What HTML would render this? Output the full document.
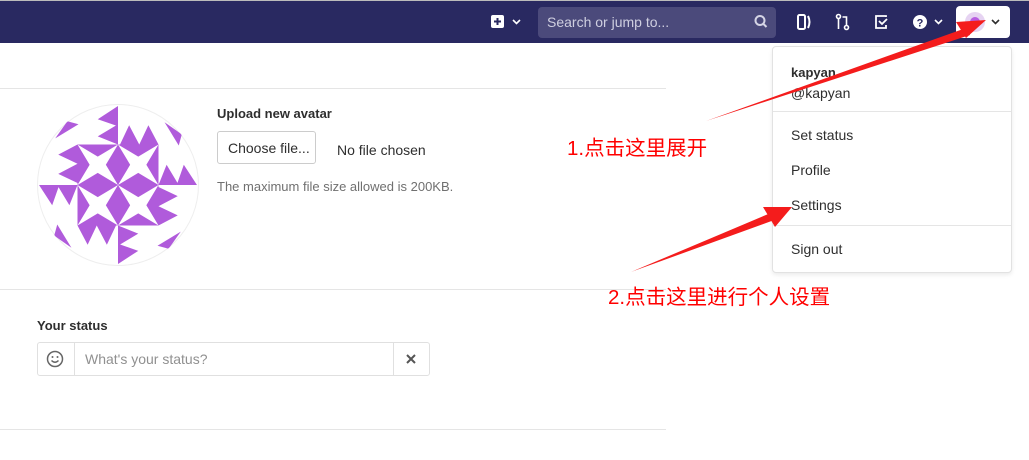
<!DOCTYPE html>
<html><head><meta charset="utf-8"><style>
*{margin:0;padding:0;box-sizing:border-box}
body{width:1029px;height:460px;background:#fff;position:relative;overflow:hidden;font-family:"Liberation Sans","Noto Sans CJK SC",sans-serif;color:#2e2e2e;font-size:14px}
.abs{position:absolute}
.hdr{left:0;top:0;width:1029px;height:43px;background:#292961;border-top:1px solid #bbb}
.line{height:1px;background:#e5e5e5;left:0;width:666px}
.dd{left:772px;top:46px;width:240px;height:227px;border:1px solid #e2e2e2;border-radius:4px;background:#fff;box-shadow:0 2px 4px rgba(0,0,0,.08)}
.dd div{position:absolute;left:18px;font-size:14px;color:#2e2e2e}
.sep{left:0!important;width:238px;height:1px;background:#e5e5e5}
.red{color:#f00;font-size:20.5px;font-family:"Liberation Sans","Noto Sans CJK SC",sans-serif}
</style></head><body>
<div class="abs hdr"></div>
<svg class="abs" style="left:0;top:0" width="1029" height="44">
 <rect x="491" y="15" width="13" height="13" rx="2" fill="#fff"/>
 <path d="M497.5 18v7M494 21.5h7" stroke="#292961" stroke-width="2"/>
 <path d="M513 20l3.5 3.5 3.5-3.5" stroke="#fff" stroke-width="1.6" fill="none"/>
 <rect x="538" y="7" width="238" height="31" rx="4" fill="#4b4a7b"/>
 <circle cx="760" cy="20.5" r="4.5" stroke="#d5d5e5" stroke-width="2" fill="none"/>
 <path d="M763.5 24l3 3" stroke="#d5d5e5" stroke-width="2"/>
 <rect x="798" y="15" width="7" height="14" rx="1.5" stroke="#fff" stroke-width="2" fill="none"/>
 <path d="M808 16q3 6 0 12" stroke="#fff" stroke-width="2" fill="none"/>
 <circle cx="838.5" cy="16.5" r="2" stroke="#fff" stroke-width="1.6" fill="none"/>
 <circle cx="846.5" cy="27.5" r="2" stroke="#fff" stroke-width="1.6" fill="none"/>
 <path d="M838.5 19v10M846.5 25v-8h-4" stroke="#fff" stroke-width="1.6" fill="none"/>
 <path d="M886 17v-1h-10v12h10v-3" stroke="#fff" stroke-width="1.8" fill="none"/>
 <path d="M879 21l3 3 5-5" stroke="#fff" stroke-width="1.8" fill="none"/>
 <circle cx="920" cy="22" r="7" fill="#fff"/>
 <text x="920" y="26.5" font-size="11" font-weight="bold" fill="#292961" text-anchor="middle" font-family="Liberation Sans">?</text>
 <path d="M935 20l3.5 3.5 3.5-3.5" stroke="#fff" stroke-width="1.6" fill="none"/>
 <rect x="956" y="6" width="54" height="32" rx="4" fill="#fff"/>
 <circle cx="975" cy="22" r="10" fill="#e6d3f2"/>
 <circle cx="975" cy="22" r="5" fill="#b85ee0"/>
 <path d="M992 20l3.5 3.5 3.5-3.5" stroke="#2e2e2e" stroke-width="1.6" fill="none"/>
</svg>
<div class="abs" style="left:547px;top:14px;color:#cfcfe0;font-size:14px">Search or jump to...</div>

<div class="abs line" style="top:88px"></div>
<div class="abs line" style="top:289px"></div>
<div class="abs line" style="top:429px"></div>

<svg class="abs" style="left:37px;top:104px" width="162" height="162" viewBox="0 0 160 160">
 <defs><clipPath id="c"><circle cx="80" cy="80" r="80"/></clipPath>
 <g id="q">
  <path d="M82 40L91 21L101 40ZM101 40L110 21L120 40Z" fill="#b05bdb"/>
  <path d="M120 80L128 60L140 80ZM138 80L145 60L158 80Z" fill="#b05bdb"/>
  <path d="M126 18L143 30L140 41Z" fill="#b05bdb"/>
  <rect x="80" y="40" width="40" height="40" fill="#b05bdb"/>
  <path d="M80 40L100 52L120 40L108 60L120 80L100 68L80 80L92 60Z" fill="#fff"/>
 </g></defs>
 <circle cx="80" cy="80" r="79.5" fill="#fff" stroke="#eee"/>
 <g clip-path="url(#c)">
  <use href="#q"/>
  <use href="#q" transform="rotate(90 80 80)"/>
  <use href="#q" transform="rotate(180 80 80)"/>
  <use href="#q" transform="rotate(270 80 80)"/>
 </g>
</svg>

<div class="abs" style="left:217px;top:106px;font-weight:bold;font-size:13px">Upload new avatar</div>
<div class="abs" style="left:217px;top:131px;width:99px;height:33px;border:1px solid #ccc;border-radius:3px;font-size:14px;padding:8px 0 0 10px;background:#fff">Choose file...</div>
<div class="abs" style="left:337px;top:142px;font-size:14px">No file chosen</div>
<div class="abs" style="left:217px;top:179px;font-size:13px;color:#707070">The maximum file size allowed is 200KB.</div>

<div class="abs" style="left:37px;top:318px;font-weight:bold;font-size:13px">Your status</div>
<div class="abs" style="left:37px;top:342px;width:393px;height:34px;border:1px solid #e0e0e0;border-radius:3px"></div>
<div class="abs" style="left:74px;top:342px;width:1px;height:34px;background:#e0e0e0"></div>
<div class="abs" style="left:393px;top:342px;width:1px;height:34px;background:#e0e0e0"></div>
<svg class="abs" style="left:46px;top:350px" width="18" height="18"><circle cx="9" cy="9" r="7.5" stroke="#666" stroke-width="1.5" fill="none"/><circle cx="6.5" cy="7" r="1" fill="#666"/><circle cx="11.5" cy="7" r="1" fill="#666"/><path d="M5.5 10.5q3.5 3.5 7 0" stroke="#666" stroke-width="1.4" fill="none"/></svg>
<div class="abs" style="left:85px;top:351px;color:#909090;font-size:14px">What's your status?</div>
<svg class="abs" style="left:405px;top:353px" width="12" height="12"><path d="M2 2l8 8M10 2l-8 8" stroke="#555" stroke-width="2"/></svg>

<div class="abs dd">
 <div style="top:18px;font-weight:bold;font-size:13px">kapyan</div>
 <div style="top:38px">@kapyan</div>
 <div class="sep" style="top:64px"></div>
 <div style="top:80px">Set status</div>
 <div style="top:115px">Profile</div>
 <div style="top:150px">Settings</div>
 <div class="sep" style="top:178px"></div>
 <div style="top:194px">Sign out</div>
</div>

<div class="abs red" style="left:567px;top:131px">1.点击这里展开</div>
<div class="abs red" style="left:608px;top:280px">2.点击这里进行个人设置</div>
<svg class="abs" style="left:0;top:0" width="1029" height="460">
 <path d="M706 121L966 28L970 35Z" fill="#f41c1c"/>
 <path d="M986 20L956 22L966 38Z" fill="#f41c1c"/>
 <path d="M631 272L773 212L777 219Z" fill="#f41c1c"/>
 <path d="M792 207L763 207L775 227Z" fill="#f41c1c"/>
</svg>
</body></html>
